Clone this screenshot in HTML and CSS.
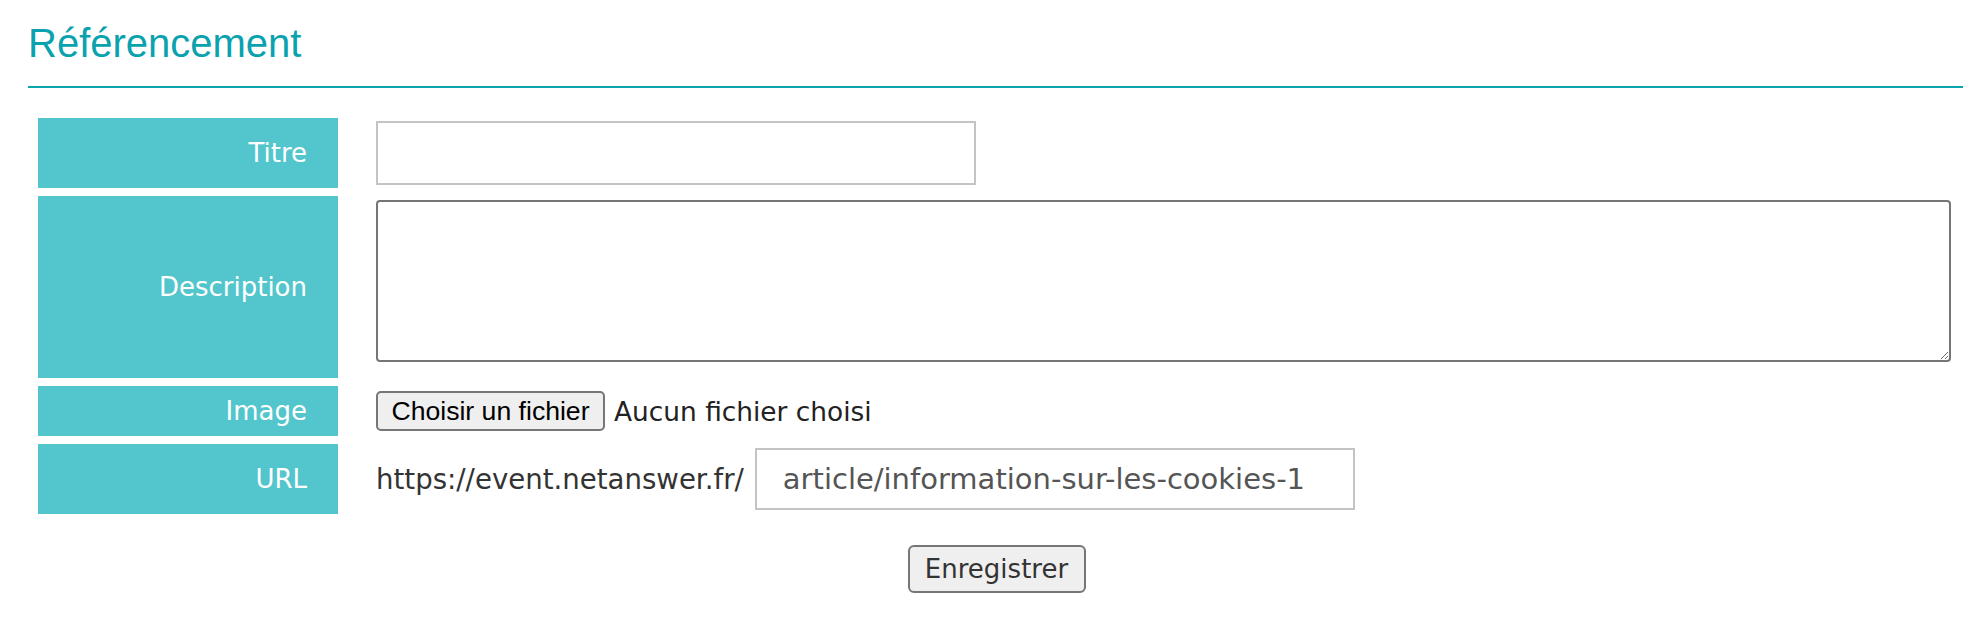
FILE: index.html
```html
<!DOCTYPE html>
<html lang="fr">
<head>
<meta charset="utf-8">
<title>Référencement</title>
<link rel="stylesheet" href="styles.css">
</head>
<body>
<div class="page">
  <h2 class="section-title">Référencement</h2>
  <form class="seo-form">
    <div class="label label-titre">Titre</div>
    <div class="field field-titre"><input class="text-input title-input" type="text"></div>

    <div class="label label-desc">Description</div>
    <div class="field field-desc"><textarea class="desc-input"></textarea></div>

    <div class="label label-image">Image</div>
    <div class="field field-image">
      <span class="file-button">Choisir un fichier</span>
      <span class="file-status">Aucun fichier choisi</span>
    </div>

    <div class="label label-url">URL</div>
    <div class="field field-url">
      <span class="url-prefix">https://event.netanswer.fr/</span>
      <input class="text-input url-input" type="text" value="article/information-sur-les-cookies-1">
    </div>

    <div class="actions">
      <button class="save-button" type="button">Enregistrer</button>
    </div>
  </form>
</div>
</body>
</html>
```

FILE: styles.css
```css
* { box-sizing: border-box; }

html, body {
  margin: 0;
  padding: 0;
  background: #ffffff;
}

body {
  font-family: "DejaVu Sans", Verdana, sans-serif;
  font-size: 26px;
  color: #333333;
}

.page {
  padding: 20px 25px 0 28px;
}

.section-title {
  margin: 0;
  font-family: "Liberation Sans", Arial, sans-serif;
  font-weight: normal;
  font-size: 40px;
  line-height: 46px;
  color: #0aa2ae;
  padding-bottom: 20px;
  border-bottom: 2px solid #0aa3b0;
}

.seo-form {
  margin: 22px 0 0 2px;
  padding: 8px;
  display: grid;
  grid-template-columns: 300px 1fr;
  grid-template-rows: 70px 182px 50px 70px auto;
  gap: 8px;
}

.label {
  background: #53c5cc;
  color: #ffffff;
  display: flex;
  align-items: center;
  justify-content: flex-end;
  padding-right: 31px;
  font-size: 26px;
}

.field {
  display: flex;
  align-items: center;
  padding: 0 4px 0 30px;
}

.field-desc {
  align-items: flex-start;
  padding-top: 4px;
}

.text-input {
  font-family: "DejaVu Sans", Verdana, sans-serif;
  font-size: 29px;
  color: #555555;
  border: 2px solid #c4c4c4;
  border-radius: 0;
  background: #ffffff;
  padding: 0 0 0 26px;
  outline: none;
}

.title-input {
  width: 600px;
  height: 64px;
}

.desc-input {
  width: 100%;
  height: 162px;
  border: 2px solid #767676;
  border-radius: 4px;
  background: #ffffff;
  font-family: "DejaVu Sans", Verdana, sans-serif;
  font-size: 26px;
  padding: 4px;
  margin: 0;
}

.file-button {
  display: inline-flex;
  align-items: center;
  justify-content: center;
  width: 229px;
  height: 40px;
  font-family: "Liberation Sans", Arial, sans-serif;
  font-size: 26.6px;
  color: #000000;
  background: #efefef;
  border: 2px solid #767676;
  border-radius: 5px;
}

.file-status {
  margin-left: 9px;
  font-size: 26.4px;
  color: #222222;
}

.url-prefix {
  font-size: 27.6px;
  color: #333333;
}

.url-input {
  margin-left: 11px;
  width: 600px;
  height: 62px;
}

.actions {
  grid-column: 1 / 3;
  display: flex;
  justify-content: center;
  padding-top: 23px;
}

.save-button {
  width: 178px;
  height: 48px;
  font-family: "DejaVu Sans", Verdana, sans-serif;
  font-size: 26px;
  color: #333333;
  background: #efefef;
  border: 2px solid #767676;
  border-radius: 6px;
  padding: 0;
}
```
